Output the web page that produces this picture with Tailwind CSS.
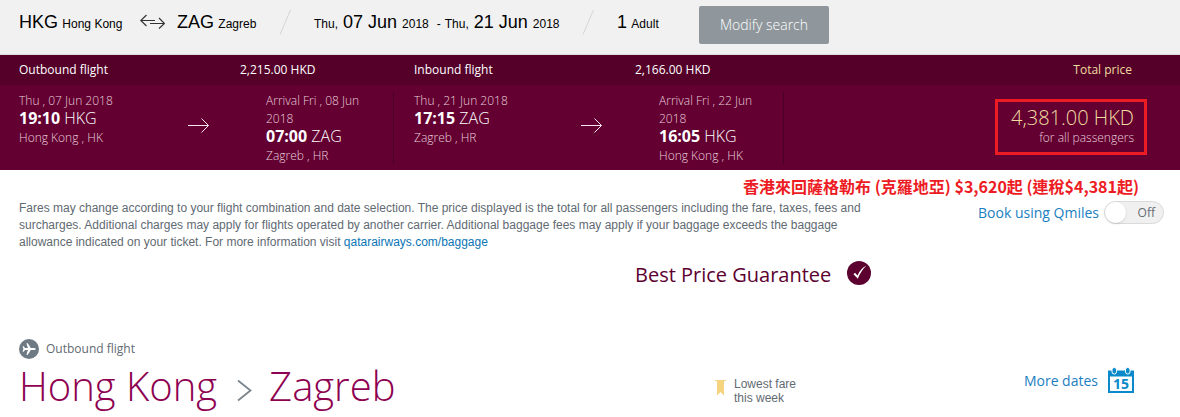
<!DOCTYPE html>
<html lang="en">
<head>
<meta charset="utf-8">
<meta name="viewport" content="width=device-width, initial-scale=1">
<title>Flight selection</title>
<script src="https://cdn.jsdelivr.net/npm/@tailwindcss/browser@4"></script>
</head>
<body class="bg-white font-['Open_Sans','Noto_Sans_CJK_TC',sans-serif] text-[12px]">

<header class="flex h-[55px] items-start border-b border-[#dcdcdc] bg-[#f1f1f1] pl-[19px] font-['Liberation_Sans',Arial,sans-serif] leading-6 text-black whitespace-nowrap">
  <p class="w-[121px] pt-[10px]"><span class="text-[18px]">HKG</span> <span class="ml-px">Hong Kong</span></p>
  <svg class="mt-[13px] mr-3 h-4 w-[25px]" viewBox="0 0 25 16" fill="none" stroke="#333" stroke-width="1.200" aria-hidden="true"><path d="M15 7.500H.8M6.500 2 .8 7.500 6.500 13M10 10.500H24.200M19 5l5.500 5.500L19 15.500"/></svg>
  <p class="w-[102px] pt-[10px]"><span class="text-[18px]">ZAG</span> <span class="ml-px">Zagreb</span></p>
  <svg class="mt-[10px] h-[25px] w-3" viewBox="0 0 12 25" fill="none" stroke="#d6d6d6" aria-hidden="true"><path d="M1 24.500 11.500 0"/></svg>
  <p class="flex w-[291px] items-baseline pt-[10px] pl-[23px]"><span>Thu,</span><span class="ml-[5px] text-[18px]">07 Jun</span><span class="ml-[5px]">2018</span><span class="ml-2">-</span><span class="ml-1">Thu,</span><span class="ml-[5px] text-[18px]">21 Jun</span><span class="ml-[5px]">2018</span></p>
  <svg class="mt-[10px] h-[25px] w-3" viewBox="0 0 12 25" fill="none" stroke="#d6d6d6" aria-hidden="true"><path d="M1 24.500 11.500 0"/></svg>
  <p class="w-[105px] pt-[10px] pl-[23px]"><span class="text-[18px]">1</span> <span class="ml-px">Adult</span></p>
  <button type="button" class="mt-[6px] h-[38px] w-[130px] rounded-xs bg-[#8f979c] font-['Open_Sans',sans-serif] text-[14px] font-light text-white">Modify search</button>
</header>

<section aria-label="Selected flights" class="bg-[#630031] text-white">
  <div class="flex h-[30px] items-center bg-[#540029] pr-12 pl-[19px]">
    <span class="w-[221px]">Outbound flight</span>
    <span class="w-[174px]">2,215.00 HKD</span>
    <span class="w-[221px]">Inbound flight</span>
    <span>2,166.00 HKD</span>
    <span class="ml-auto text-[#f0dca0]">Total price</span>
  </div>
  <div class="flex pt-[6px] pb-[5px] pr-[33px] pl-[19px] leading-[18px] font-light text-[#e8cfdb]">
    <div class="flex w-[375px] border-r border-[#4d0026]">
      <div class="w-[169px] pt-[1px]">
        <p>Thu , 07 Jun 2018</p>
        <p class="text-[16px] leading-4 text-white"><b class="font-bold">19:10</b> HKG</p>
        <p class="pt-[3px]">Hong Kong , HK</p>
      </div>
      <svg class="mt-[26px] mr-[57px] h-4 w-[21px]" viewBox="0 0 21 16" fill="none" stroke="#f3e6ec" aria-hidden="true"><path d="M0 8.500H20.500M13.500 1.500l7 7-7 7"/></svg>
      <div class="w-[100px] pt-[1px]">
        <p>Arrival Fri , 08 Jun 2018</p>
        <p class="text-[16px] leading-4 text-white"><b class="font-bold">07:00</b> ZAG</p>
        <p class="pt-[3px]">Zagreb , HR</p>
      </div>
    </div>
    <div class="flex w-[390px] border-r border-[#4d0026] pl-[20px]">
      <div class="w-[167px] pt-[1px]">
        <p>Thu , 21 Jun 2018</p>
        <p class="text-[16px] leading-4 text-white"><b class="font-bold">17:15</b> ZAG</p>
        <p class="pt-[3px]">Zagreb , HR</p>
      </div>
      <svg class="mt-[26px] mr-[57px] h-4 w-[21px]" viewBox="0 0 21 16" fill="none" stroke="#f3e6ec" aria-hidden="true"><path d="M0 8.500H20.500M13.500 1.500l7 7-7 7"/></svg>
      <div class="w-[100px] pt-[1px]">
        <p>Arrival Fri , 22 Jun 2018</p>
        <p class="text-[16px] leading-4 text-white"><b class="font-bold">16:05</b> HKG</p>
        <p class="pt-[3px]">Hong Kong , HK</p>
      </div>
    </div>
    <div class="mt-2 ml-auto h-14 border-3 border-[#ed1c24] pr-[10px] pl-[13px] pt-1 text-right">
      <p class="text-[20px] leading-6 text-[#f0dca0]">4,381.00 HKD</p>
      <p class="leading-4">for all passengers</p>
    </div>
  </div>
</section>

<p lang="zh-Hant" class="pt-[4px] pr-[41px] text-right font-['Noto_Sans_CJK_TC',sans-serif] text-[16px] leading-6 font-bold text-[#ed1c24]">香港來回薩格勒布 (克羅地亞) $3,620起 (連稅$4,381起)</p>

<div class="flex items-start justify-between pr-4 pl-[19px]">
  <p class="w-[860px] pt-[2px] font-['Liberation_Sans',Arial,sans-serif] leading-[17px] text-[#5f6a72]">Fares may change according to your flight combination and date selection. The price displayed is the total for all passengers including the fare, taxes, fees and<br>surcharges. Additional charges may apply for flights operated by another carrier. Additional baggage fees may apply if your baggage exceeds the baggage<br>allowance indicated on your ticket. For more information visit <a href="#" class="text-[#0a75b5]">qatarairways.com/baggage</a></p>
  <label class="mt-[3px] flex cursor-pointer items-center gap-[5px] text-[14px] text-[#1a80bf]">Book using Qmiles
    <input type="checkbox" role="switch" class="peer sr-only">
    <span class="flex h-[23px] w-[60px] items-center justify-between rounded-full border border-[#dadada] bg-[#f0f0f0] pr-2 text-[12px] text-[#666e73]"><span class="size-[21px] rounded-full bg-white shadow"></span>Off</span>
  </label>
</div>

<div class="flex h-11 items-center gap-4 pl-[635px] text-[#5c0030]">
  <p class="pt-1 text-[20px] leading-7 whitespace-nowrap">Best Price Guarantee</p>
  <svg class="size-6" viewBox="0 0 24 24" aria-hidden="true"><circle cx="12" cy="12" r="12" fill="#5c0030"/><path d="M6.500 13.200 8 11.800l2.500 2.600C12.500 10 15.500 6.500 19.300 4.800 15.500 8.500 12.800 12.500 10.800 17.800Z" fill="#fff"/></svg>
</div>

<main class="flex items-end justify-between pt-11 pr-[46px] pl-[19px]">
  <div class="w-[696px]">
    <p class="flex items-center gap-[7px] leading-5 text-[#5f6a72]">
      <svg class="size-5" viewBox="0 0 20 20" aria-hidden="true"><circle cx="10" cy="10" r="10" fill="#6f7b84"/><path d="M16.800 10c0-.7-1.200-1.100-2.400-1.100h-2.600L8.800 4.200H7.400l1.500 4.700H6L4.700 7.300H3.600L4.400 10l-.8 2.700h1.100L6 11.100h2.900l-1.500 4.700h1.400l3-4.700h2.600c1.200 0 2.400-.4 2.400-1.100Z" fill="#fff"/></svg>
      Outbound flight
    </p>
    <h1 class="flex items-center text-[40px] leading-[54px] font-light text-[#8e0050] whitespace-nowrap">Hong Kong
      <svg class="mt-2 mr-[17px] ml-5 h-[23px] w-[15px]" viewBox="0 0 15 23" fill="none" stroke="#7b868e" stroke-width="1.800" aria-hidden="true"><path d="M1 1.500 13.500 11.500 1 21.500"/></svg>
      Zagreb</h1>
  </div>
  <p class="mr-auto flex items-start gap-2 pb-2 font-['Liberation_Sans',Arial,sans-serif] leading-[14px] text-[#5f6a72]">
    <svg class="mt-[3px] h-4 w-[11px]" viewBox="0 0 11 16" aria-hidden="true"><path d="M0 0h11v1H9v14.500L5.500 12 2 15.500V1H0Z" fill="#f6d37f"/></svg>
    <span>Lowest fare<br>this week</span>
  </p>
  <a href="#" class="flex items-center gap-[10px] pb-5 text-[14px] text-[#1a80bf]">More dates
    <svg class="h-[26px] w-[26px]" viewBox="0 0 26 26" aria-hidden="true"><path d="M0 3.500h26V26H0Z" fill="#0a8acb"/><path d="M2 9.500h22V24H2Z" fill="#fff"/><g fill="#0a8acb" stroke="#fff"><rect x="4" y=".5" width="4.500" height="6.500" rx="2.200"/><rect x="17.500" y=".5" width="4.500" height="6.500" rx="2.200"/></g><text x="13" y="22" text-anchor="middle" font-family="Open Sans, sans-serif" font-size="14" font-weight="700" fill="#0a8acb">15</text></svg>
  </a>
</main>
</body>
</html>
